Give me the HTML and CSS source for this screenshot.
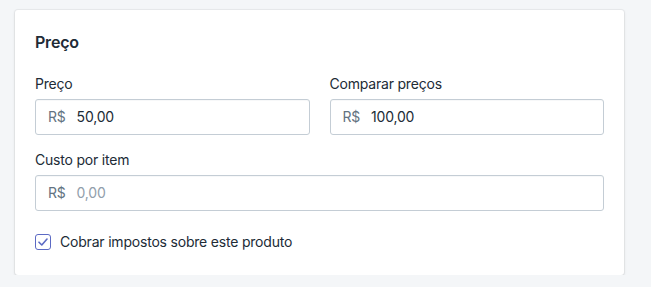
FILE: index.html
```html
<!DOCTYPE html>
<html lang="pt-BR">
<head>
  <meta charset="UTF-8">
  <title>Preço</title>
  <link rel="stylesheet" href="styles.css">
</head>
<body>
  <div class="card">
    <h2 class="card-title">Preço</h2>

    <div class="form-row">
      <div class="field">
        <label class="label">Preço</label>
        <div class="input">
          <span class="prefix">R$</span>
          <span class="value">50,00</span>
        </div>
      </div>
      <div class="field">
        <label class="label">Comparar preços</label>
        <div class="input">
          <span class="prefix">R$</span>
          <span class="value">100,00</span>
        </div>
      </div>
    </div>

    <div class="field">
      <label class="label">Custo por item</label>
      <div class="input">
        <span class="prefix">R$</span>
        <span class="value placeholder">0,00</span>
      </div>
    </div>

    <label class="checkbox-row">
      <span class="checkbox">
        <svg width="10" height="8" viewBox="0 0 10 8">
          <path d="M1 4.2 L3.8 7 L9 1" fill="none" stroke="#5c6ac4" stroke-width="1.6" stroke-linecap="round" stroke-linejoin="round"/>
        </svg>
      </span>
      Cobrar impostos sobre este produto
    </label>
  </div>
</body>
</html>
```

FILE: styles.css
```css
body {
  margin: 0;
  background-color: #f4f6f8;
  color: #212b36;
  font-family: Inter, "Noto Sans", sans-serif;
  font-size: 14px;
  line-height: 20px;
  letter-spacing: -0.2px;
}

.card {
  width: 609px;
  box-sizing: border-box;
  margin: 10px 0 0 15px;
  padding: 20px 20px 23px;
  background-color: white;
  border-radius: 3px;
  box-shadow: 0 0 0 1px rgba(63, 63, 68, 0.05), 0 1px 3px 0 rgba(63, 63, 68, 0.15);
}

.card-title {
  margin: 0 0 20px;
  font-size: 16px;
  font-weight: 600;
  line-height: 24px;
}

.form-row {
  display: flex;
  gap: 20px;
}

.form-row .field {
  flex: 1;
}

.field {
  margin-bottom: 15px;
}

.label {
  display: block;
  margin-bottom: 5px;
}

.input {
  display: flex;
  align-items: center;
  height: 36px;
  box-sizing: border-box;
  padding: 0 12px;
  border: 1px solid #c4cdd5;
  border-radius: 3px;
  box-shadow: inset 0 1px 0 0 rgba(99, 115, 129, 0.05);
}

.prefix {
  color: #637381;
  margin-right: 11px;
}

.placeholder {
  color: #919eab;
}

.checkbox-row {
  display: flex;
  align-items: center;
  gap: 9px;
  margin-top: 21px;
}

.checkbox {
  display: flex;
  align-items: center;
  justify-content: center;
  width: 16px;
  height: 16px;
  box-sizing: border-box;
  border: 1px solid #5c6ac4;
  border-radius: 3px;
}
```
